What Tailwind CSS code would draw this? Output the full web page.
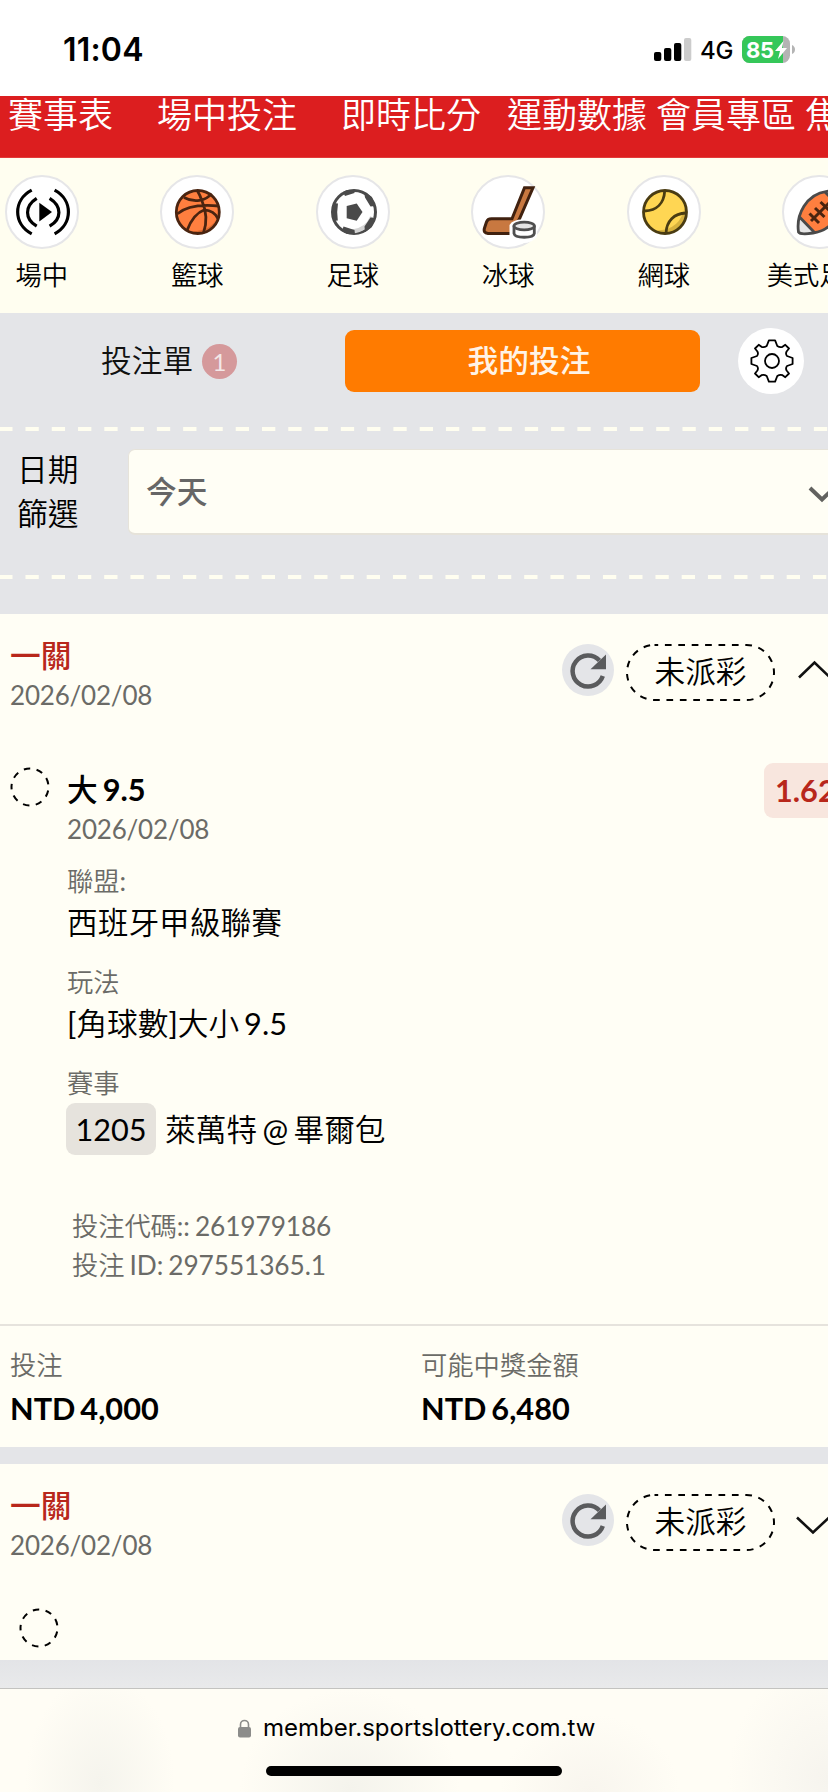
<!DOCTYPE html>
<html lang="zh-Hant">
<head>
<meta charset="utf-8">
<meta name="viewport" content="width=device-width">
<title>我的投注</title>
<script src="https://cdn.jsdelivr.net/npm/@tailwindcss/browser@4"></script>
</head>
<body class="w-[828px] h-[1792px] overflow-hidden bg-[#e4e5e8] font-[Lato,'Noto_Sans_CJK_TC',sans-serif] text-black">
<div class="w-[828px] h-[1792px] overflow-hidden flex flex-col whitespace-nowrap">

  <!-- status bar -->
  <header class="h-24 shrink-0 bg-white flex justify-between pl-[63px] pr-[33px] font-[Inter,sans-serif]">
    <div class="mt-[30px] text-[32px] leading-10 font-semibold tracking-[0.200px]">11:04</div>
    <div class="mt-[30px] h-10 flex items-center">
      <svg width="38" height="24" viewBox="0 0 38 24"><rect x="0" y="14" width="7.3" height="9" rx="2"/><rect x="10" y="10" width="7.3" height="13" rx="2"/><rect x="20" y="5" width="7.3" height="18" rx="2"/><rect x="30" y="0" width="7.3" height="23" rx="2" fill="#ccc"/></svg>
      <span class="ml-[8px] w-[42px] text-[24px] font-medium tracking-[-0.3px] pt-px">4G</span>
      <svg class="-mt-px" width="53" height="27" viewBox="0 0 53 27"><defs><clipPath id="bat"><rect width="48" height="27" rx="7.5"/></clipPath></defs><g clip-path="url(#bat)"><rect width="48" height="27" fill="#b4b4b4"/><rect width="41" height="27" fill="#35c759"/></g><path d="M50 9v9q3-1.500 3-4.500T50 9" fill="#b4b4b4"/><text x="4" y="21.500" font-family="Inter" font-weight="700" font-size="22" fill="#fff" textLength="28">85</text><path d="M41.500 5 33 15h5l-2 8 9-11h-5z" fill="#fff"/></svg>
    </div>
  </header>

  <!-- main navigation -->
  <nav class="h-[62px] shrink-0 bg-[#dc1e1f] border-b border-[#e23b3a] flex pl-2 text-[35px] leading-[36px] text-white font-[350]">
    <span class="w-[149px] shrink-0">賽事表</span><span class="w-[184px] shrink-0">場中投注</span><span class="w-[166px] shrink-0">即時比分</span><span class="w-[149px] shrink-0">運動數據</span><span class="w-[149px] shrink-0">會員專區</span><span class="shrink-0">焦點</span>
  </nav>

  <!-- sports strip -->
  <section class="h-[155px] shrink-0 bg-[#fffef0] flex pt-[17px] -ml-[36px] text-[26.300px] leading-[36px] font-[350]">
    <div class="w-[155.500px] shrink-0 flex flex-col items-center gap-2">
      <svg width="74" height="74" viewBox="0 0 74 74" fill="none"><circle cx="37" cy="37" r="36" fill="#fff" stroke="#e6e6e8" stroke-width="2"/><g stroke="#000" stroke-width="3.200"><path d="M26.700 15.200C8 25 8 49 26.700 58.800M31.700 23.300C19.500 31 19.500 44 31.700 51.200M49.600 15.200C68 25 68 49 49.600 58.800M44.600 23.300C57 31 57 44 44.600 51.200"/></g><path d="M34.300 27.700 47 37 34.300 46.500z" fill="#000"/></svg>
      <span>場中</span>
    </div>
    <div class="w-[155.500px] shrink-0 flex flex-col items-center gap-2">
      <svg width="74" height="74" viewBox="0 0 74 74" fill="none"><circle cx="37" cy="37" r="36" fill="#fff" stroke="#e6e6e8" stroke-width="2"/><circle cx="37.800" cy="37" r="21.500" fill="#ff7f3f"/><path d="M57 42A20.500 20.500 0 0 1 32 56.500Q53 55 57 42" fill="#d9692f"/><g stroke="#4a2410" stroke-width="2.800"><circle cx="37.800" cy="37" r="21.500"/><path d="M17.500 38.800C27 30.500 44 29.500 59 31M24 22.500C34 28 46 26 51.500 18.500M37.500 16Q40 20 42 26Q49 42 43.500 58M27 55.500C31 45 37 37.500 44.500 34.800Q54 35.500 58 43.500"/></g></svg>
      <span>籃球</span>
    </div>
    <div class="w-[155.500px] shrink-0 flex flex-col items-center gap-2">
      <svg width="74" height="74" viewBox="0 0 74 74" fill="none"><circle cx="37" cy="37" r="36" fill="#fff" stroke="#e6e6e8" stroke-width="2"/><circle cx="38" cy="37" r="21.500" fill="#fff" stroke="#4a4a4a" stroke-width="3"/><path d="M56 42Q51 55 36 56.500" stroke="#d4d4d4" stroke-width="4"/><g fill="#4a4a4a"><path d="M30.700 31 40.700 28.500 46.500 37 40.700 45.700 30.700 43.300z"/><path d="M17 28 22 28.500Q20.500 37 21.800 45.500L17 46zM27 17 29 21 38.500 18V15H31zM48 17 49 22.500 54.500 31.500 59 31 56 22zM48.500 51.500 54.500 42.500 58.500 43 56 52 49 57zM26 56 27.500 51.500 38.500 55 39 59 31 59z"/></g></svg>
      <span>足球</span>
    </div>
    <div class="w-[155.500px] shrink-0 flex flex-col items-center gap-2">
      <svg width="74" height="74" viewBox="0 0 74 74" fill="none"><circle cx="37" cy="37" r="36" fill="#fff" stroke="#e6e6e8" stroke-width="2"/><path d="M53.500 12.800H62L48.500 43.800L40 58.500H17Q12 58 13.500 53L15.500 47Q16.500 43.800 20.500 43.800H41z" fill="#c87840" stroke="#40210f" stroke-width="3"/><path d="M38.500 62V50Q42 44 53 44.500Q64 45 66 50V62Q60 68 53 68 44 68 38.500 62" fill="#fff"/><path d="M43 50.500V58.500C44 63.500 62.500 63.500 63.300 58.500V50.500" fill="#fff" stroke="#4f4f4f" stroke-width="2.800"/><ellipse cx="53.200" cy="51" rx="10.200" ry="3.800" fill="#e6e6e6" stroke="#4f4f4f" stroke-width="2.800"/></svg>
      <span>冰球</span>
    </div>
    <div class="w-[155.500px] shrink-0 flex flex-col items-center gap-2">
      <svg width="74" height="74" viewBox="0 0 74 74" fill="none"><circle cx="37" cy="37" r="36" fill="#fff" stroke="#e6e6e8" stroke-width="2"/><circle cx="38" cy="37" r="21.500" fill="#ffd653"/><path d="M58 30A21 21 0 0 1 28 55.500Q54 56 58 30" fill="#d8b23e"/><g stroke="#4a3c12" stroke-width="2.800"><circle cx="38" cy="37" r="21.500"/><path d="M37.700 16C37 28 30 35.500 17.500 36M59 38C47 38.500 39.500 46 39 58"/></g></svg>
      <span>網球</span>
    </div>
    <div class="w-[155.500px] shrink-0 flex flex-col items-center gap-2">
      <svg width="74" height="74" viewBox="0 0 74 74" fill="none"><circle cx="37" cy="37" r="36" fill="#fff" stroke="#e6e6e8" stroke-width="2"/><path d="M16.500 57C14 40 24 19 45 16.300 54 15 58 16 59 18 61 34 53 55 31 58 21 59.500 17.500 59 16.500 57z" fill="#ff7f3f"/><path d="M16.500 57Q15 49 17.500 42L32 57.500Q18 60 16.500 57M59 18Q61 25 57.500 33L43 17Q57 14 59 18" fill="#e6e6e6"/><g stroke="#4a4a4a" stroke-width="2.800"><path d="M16.500 57C14 40 24 19 45 16.300 54 15 58 16 59 18 61 34 53 55 31 58 21 59.500 17.500 59 16.500 57zM18 42.500 32.500 57.500M43 17 58 32"/><path d="M29 46 47 28M27.500 38.500 37 48M33 33 42.500 42M38.500 27 48 36" stroke="#4a2410" stroke-width="3"/></g></svg>
      <span>美式足球</span>
    </div>
  </section>

  <!-- bet slip tabs -->
  <section class="h-[114px] shrink-0 flex items-start pt-[15px] text-[30.700px]">
    <div class="w-[345px] h-[66px] shrink-0 flex items-center pl-[101px] text-[#111]">
      <span class="font-[350] leading-10">投注單</span>
      <span class="ml-[9px] size-[35px] rounded-full bg-[#d5999b] text-[#f3e8e8] text-[24px] leading-[35px] text-center">1</span>
    </div>
    <button class="mt-0.5 w-[355px] h-[62px] shrink-0 rounded-[9px] bg-[#ff7b00] text-[#fff3e6] font-medium leading-[60px] pl-[13px]">我的投注</button>
    <div class="ml-[38px] size-[66px] shrink-0 rounded-full bg-white flex items-center justify-center">
      <svg class="ml-0.5" width="46" height="46" viewBox="-23 -23 46 46" fill="none" stroke="#000" stroke-width="1.800" stroke-linejoin="round"><circle r="7"/><path d="M-3.100-20.600H3.100L5.300-15Q8-13.200 10.500-14.200L13.300-16.200 17-12.500 14.600-9.500Q13.300-7 15-5L20.600-3V3L15 5Q13.300 7 14.600 9.500L17 12.500 13.300 16.200 10.500 14.200Q8 13.200 5.300 15L3.100 20.600H-3.100L-5.300 15Q-8 13.200-10.500 14.200L-13.300 16.200-17 12.500-14.600 9.500Q-13.300 7-15 5L-20.600 3V-3L-15-5Q-13.300-7-14.600-9.500L-17-12.500-13.300-16.200-10.500-14.200Q-8-13.200-5.300-15z"/></svg>
    </div>
  </section>

  <!-- date filter -->
  <section class="h-[187px] shrink-0">
    <svg class="block" width="828" height="4"><path d="M-.8 2H828" stroke="#fffef0" stroke-width="4" stroke-dasharray="13.300 12.980"/></svg>
    <div class="flex h-[144px] pt-[18px] text-[30.700px]">
      <div class="w-[128px] shrink-0 pl-[17px] -mt-px leading-[44px] font-[350]"><div>日期</div><div>篩選</div></div>
      <div class="w-[720px] h-[86px] shrink-0 rounded-[7px] bg-[#fffef5] border border-b-2 border-[#e6e3da] pl-[17px] flex items-center text-[#666] font-medium">
        <span class="w-[662px] shrink-0 leading-10">今天</span>
        <svg class="mt-1 shrink-0" width="28" height="18" viewBox="0 0 28 18" fill="none" stroke="#62625f" stroke-width="4"><path d="M2 3 14 14.500 26 3"/></svg>
      </div>
    </div>
    <svg class="block" width="828" height="4"><path d="M-.8 2H828" stroke="#fffef0" stroke-width="4" stroke-dasharray="13.300 12.950"/></svg>
  </section>

  <!-- expanded bet -->
  <article class="w-[860px] h-[833px] shrink-0 bg-[#fffef5] flex flex-col">
    <div class="flex h-[149px] shrink-0 pt-[22px]">
      <div class="w-[562px] shrink-0 pl-[10px]">
        <div class="text-[30.700px] leading-10 font-medium text-[#b8271b]">一關</div>
        <div class="text-[26px] leading-[38px] tracking-[-0.200px] text-[#6b6b67]">2026/02/08</div>
      </div>
      <svg class="mt-2 shrink-0" width="52" height="52" viewBox="0 0 52 52" fill="none"><circle cx="26" cy="26" r="26" fill="#e4e5e8"/><path d="M37.500 16.500A15.500 15.500 0 1 0 40.800 32" stroke="#5a5b5d" stroke-width="4.500"/><path d="M44 10.500V25.300H28.500z" fill="#5a5b5d"/></svg>
      <div class="ml-3 mt-2 relative w-[149px] h-[57px] shrink-0">
        <svg class="absolute inset-0" width="149" height="57" fill="none" stroke="#000" stroke-width="2"><rect x="1" y="1" width="147" height="55" rx="27.500" stroke-dasharray="6.700 6.700" stroke-dashoffset="3"/></svg>
        <div class="text-[30.700px] leading-[56px] font-[350] text-center">未派彩</div>
      </div>
      <svg class="ml-[23px] mt-[22px] shrink-0" width="34" height="22" viewBox="0 0 34 22" fill="none" stroke="#111" stroke-width="2.600"><path d="M1 19.500 16.500 4.500 32 19.500"/></svg>
    </div>
    <div class="flex h-[561px] shrink-0">
      <svg class="ml-[10px] mt-[4px] shrink-0" width="40" height="40" viewBox="0 0 40 40" fill="none" stroke="#000" stroke-width="2"><circle cx="20" cy="20" r="18.500" stroke-dasharray="6.460 6.460" stroke-dashoffset="3.200" transform="rotate(180 20 20)"/></svg>
      <div class="ml-[17px] w-[697px] shrink-0 text-[30.700px]">
        <div class="mt-[7px] leading-10 font-medium [word-spacing:-2.500px]"><span>大</span><span class="font-bold"> 9.5</span></div>
        <div class="text-[26px] leading-[38px] tracking-[-0.200px] text-[#6b6b67]">2026/02/08</div>
        <div class="mt-[14px] text-[26.300px] leading-[38px] text-[#6b6b67]"><span class="font-[350]">聯盟</span>:</div>
        <div class="mt-[3px] leading-10 font-[350]">西班牙甲級聯賽</div>
        <div class="mt-[20px] text-[26.300px] leading-[38px] font-[350] text-[#6b6b67]">玩法</div>
        <div class="mt-[3px] leading-10 [word-spacing:-3px]">[<span class="font-[350]">角球數</span>]<span class="font-[350]">大小</span> 9.5</div>
        <div class="mt-[20px] text-[26.300px] leading-[38px] font-[350] text-[#6b6b67]">賽事</div>
        <div class="mt-px -ml-px flex items-center h-[52px]"><span class="w-[90px] h-[52px] rounded-[9px] bg-[#e6e3dd] text-center leading-[53px] mr-[9px]">1205</span><span class="leading-10 pt-0.5 [word-spacing:-2.500px]"><span class="font-[350]">萊萬特</span> @ <span class="font-[350]">畢爾包</span></span></div>
        <div class="mt-[52px] ml-[5px] text-[26.300px] leading-[39px] tracking-[-0.100px] [word-spacing:-1.500px] text-[#6b6b67]"><div><span class="font-[350]">投注代碼</span>:: 261979186</div><div><span class="font-[350]">投注</span> ID: 297551365.1</div></div>
      </div>
      <div class="w-[90px] h-[55px] shrink-0 rounded-[9px] bg-[#f8e6de] pl-[11px] text-[30.700px] leading-[56px] font-bold text-[#b8271b]">1.62</div>
    </div>
    <div class="h-[123px] border-t-2 border-[#e6e3dd] grid grid-cols-[411px_411px] pl-[10px] pt-5">
      <div><div class="text-[26.300px] leading-[38px] font-[350] text-[#6b6b67]">投注</div><div class="mt-[5px] text-[30.700px] leading-10 font-bold [word-spacing:-2.500px]">NTD 4,000</div></div>
      <div><div class="text-[26.300px] leading-[38px] font-[350] text-[#6b6b67]">可能中獎金額</div><div class="mt-[5px] text-[30.700px] leading-10 font-bold [word-spacing:-2.500px]">NTD 6,480</div></div>
    </div>
  </article>

  <!-- collapsed bet -->
  <article class="mt-[17px] w-[860px] h-[196px] shrink-0 bg-[#fffef5]">
    <div class="flex h-[144px] pt-[22px]">
      <div class="w-[562px] shrink-0 pl-[10px]">
        <div class="text-[30.700px] leading-10 font-medium text-[#b8271b]">一關</div>
        <div class="text-[26px] leading-[38px] tracking-[-0.200px] text-[#6b6b67]">2026/02/08</div>
      </div>
      <svg class="mt-2 shrink-0" width="52" height="52" viewBox="0 0 52 52" fill="none"><circle cx="26" cy="26" r="26" fill="#e4e5e8"/><path d="M37.500 16.500A15.500 15.500 0 1 0 40.800 32" stroke="#5a5b5d" stroke-width="4.500"/><path d="M44 10.500V25.300H28.500z" fill="#5a5b5d"/></svg>
      <div class="ml-3 mt-2 relative w-[149px] h-[57px] shrink-0">
        <svg class="absolute inset-0" width="149" height="57" fill="none" stroke="#000" stroke-width="2"><rect x="1" y="1" width="147" height="55" rx="27.500" stroke-dasharray="6.700 6.700" stroke-dashoffset="3"/></svg>
        <div class="text-[30.700px] leading-[56px] font-[350] text-center">未派彩</div>
      </div>
      <svg class="ml-[21px] mt-[27px] shrink-0" width="34" height="22" viewBox="0 0 34 22" fill="none" stroke="#111" stroke-width="2.600"><path d="M1 4.500 17 19.500 33 4.500"/></svg>
    </div>
    <svg class="ml-[19px]" width="40" height="40" viewBox="0 0 40 40" fill="none" stroke="#000" stroke-width="2"><circle cx="20" cy="20" r="18.500" stroke-dasharray="6.460 6.460" stroke-dashoffset="3.200" transform="rotate(180 20 20)"/></svg>
  </article>
  <div class="h-[28px] shrink-0 bg-linear-to-b from-[#e3e4e7] to-[#e9eaeb]"></div>

  <!-- browser address bar -->
  <footer class="h-[104px] shrink-0 border-t border-[#c3c3c0] bg-[#fffdf5] bg-[radial-gradient(ellipse_75px_110px_at_100px_95px,#f5f4ed,#f5f4ed00),radial-gradient(ellipse_110px_100px_at_350px_100px,#f4f3ec,#f4f3ec00),radial-gradient(ellipse_90px_80px_at_590px_105px,#f8f5ee,#f8f5ee00),radial-gradient(ellipse_100px_120px_at_828px_90px,#f6f4ee,#f6f4ee00)] flex flex-col items-center font-[Inter,sans-serif]">
    <div class="mt-[19px] h-10 w-[356px] flex items-center">
      <svg class="ml-0.5 shrink-0" width="13" height="19" viewBox="0 0 13 19"><path d="M2.500 9V5.500a4 4 0 0 1 8 0V9" fill="none" stroke="#8c8c8a" stroke-width="1.600"/><rect y="8" width="13" height="10.500" rx="2" fill="#8c8c8a"/></svg>
      <span class="ml-[12px] text-[24px]">member.sportslottery.com.tw</span>
    </div>
    <div class="mt-[18px] w-[296px] h-[10px] rounded-full bg-black"></div>
  </footer>
</div>
</body>
</html>
